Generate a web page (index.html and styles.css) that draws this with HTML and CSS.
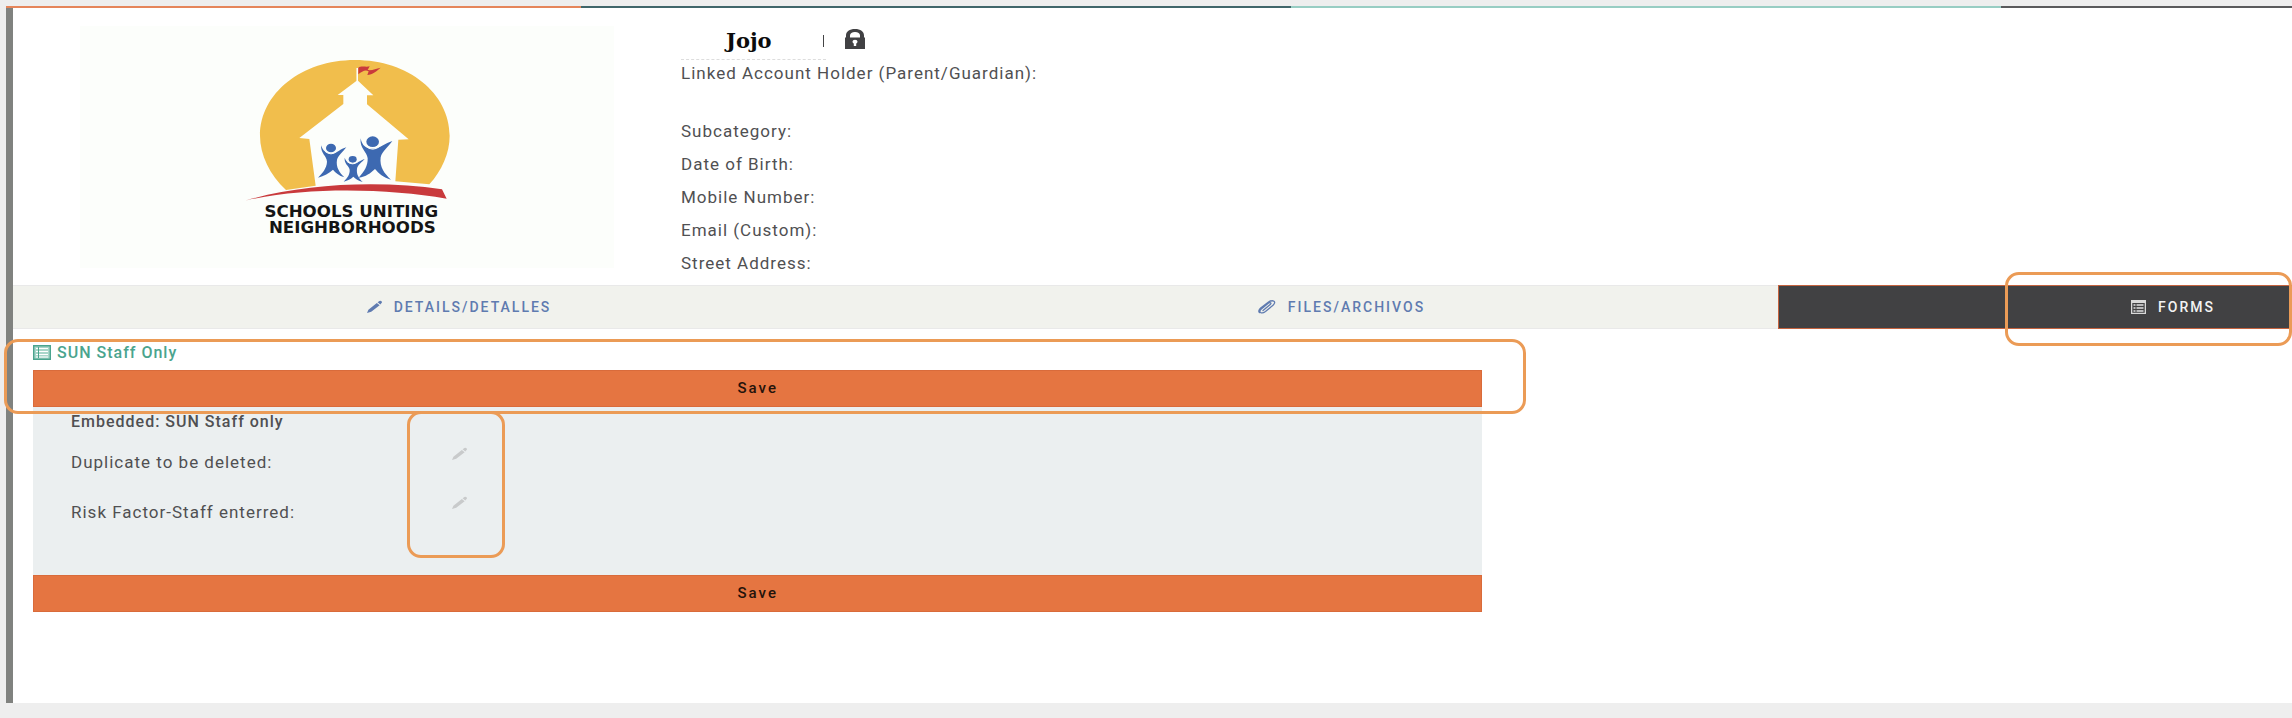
FILE: index.html
```html
<!DOCTYPE html>
<html lang="en">
<head>
<meta charset="utf-8">
<title>SUN Staff Only</title>
<link rel="stylesheet" href="styles.css">
</head>
<body>
<div class="strip"><span class="strip-orange"></span><span class="strip-teal"></span><span class="strip-mint"></span><span class="strip-dark"></span></div>
<main class="card">
  <header class="profile">
    <svg class="logo" viewBox="-420 -42 1602 726" role="img" aria-label="Schools Uniting Neighborhoods">
      <rect x="-420" y="-42" width="1602" height="726" fill="#fcfefb"/>
      <path fill="#f1be4c" d="M198 450C150 405 120 345 120 287C120 160 245 60 405 60C565 60 689 160 689 287C689 340 665 392 628 433L526 424L535 299L566 298L441 193V166H460L414 122V84H410V122L353 165H370V192L238 294L268 297L287 437Z"/>
      <path fill="#fcfefb" d="M410 84h4v40h-4z"/>
      <path fill="#c93a3c" d="M415 83C424 76 437 82 449 79L443 90C457 92 467 86 482 83C470 93 458 104 442 105L446 94C435 88 426 95 415 103Z"/>
      <path fill="#c93a3c" d="M75 482C250 430 480 420 666 448L680 476C500 445 260 440 75 482Z"/>
      <g fill="#3d69b1">
        <ellipse cx="333" cy="324" rx="15" ry="13"/>
        <path d="M303 316C309 333 319 341 334 341C350 341 362 326 379 322C369 335 355 347 351 359C347 382 359 397 373 412C357 408 346 397 339 389C327 400 312 408 294 413C307 400 320 385 321 365C320 348 302 341 303 316Z"/>
        <ellipse cx="458" cy="305" rx="19" ry="16"/>
        <path d="M422 295C426 318 439 326 458 326C480 326 496 309 517 303C506 320 486 333 482 352C478 382 494 402 513 419C490 413 476 400 465 387C451 400 438 410 416 413C433 395 444 377 443 355C441 335 418 325 422 295Z"/>
        <ellipse cx="398" cy="358" rx="12" ry="10"/>
        <path d="M374 353C379 366 386 371 398 371C411 371 422 360 434 357C425 367 413 375 411 386C409 402 415 413 428 426C415 423 406 416 400 410C392 418 383 421 371 425C382 414 390 403 389 389C387 376 372 373 374 353Z"/>
      </g>
      <path d="M315 334q18 15 36 0M436 318q22 19 45 0M383 366q15 11 30 0" fill="none" stroke="#fcfefb" stroke-width="3"/>
      <text class="logo-text" x="394" y="531">SCHOOLS UNITING</text>
      <text class="logo-text" x="397" y="579">NEIGHBORHOODS</text>
    </svg>
    <div class="info">
      <div class="name-row">
        <h1 class="name">Jojo<span class="divider"></span></h1>
        <svg class="lock" viewBox="0 0 20 20" role="img" aria-label="Locked"><path fill="#414143" fill-rule="evenodd" d="M0 8.500h1V6.500C1 2.500 4.500 0 10 0s9 2.500 9 6.500v2h1V20H0zM5 8.500h10V6.500C15 4.500 13 3 10 3S5 4.500 5 6.500zM7.500 12.500c0 1 .6 1.600 1.300 2v2.500h2.400v-2.500c.7-.4 1.300-1 1.300-2a2.500 1.800 0 0 0-5 0z"/></svg>
      </div>
      <p class="linked">Linked Account Holder (Parent/Guardian):</p>
      <ul class="facts">
        <li>Subcategory:</li>
        <li>Date of Birth:</li>
        <li>Mobile Number:</li>
        <li>Email (Custom):</li>
        <li>Street Address:</li>
      </ul>
    </div>
  </header>

  <nav class="tabs">
    <a class="tab" href="#details"><svg class="icon" viewBox="0 0 16 14"><path fill="currentColor" d="M0 13.500L1.500 9.800L10.500 2.600L13.500 5L4.500 12ZM11.300 2L13.300.6Q14.500-.2 15.500.8Q16.400 1.800 15.500 2.800L14.200 4.300Z"/></svg>DETAILS/DETALLES</a>
    <a class="tab" href="#files"><svg class="icon icon-clip" viewBox="0 0 18 14"><path fill="none" stroke="currentColor" stroke-width="1.300" stroke-linecap="round" d="M5 10.500L12.500 4.200Q13.500 3 12.300 2.700Q11.400 2.400 10.300 3.300L3 9.300Q1 11.200 2.500 12.500Q4.500 13.700 7.500 11.500L15 5.300Q17.700 2.600 16 1.300Q13.700-.1 10.500 2L2.700 8Q-.3 10.800 1.500 12.600"/></svg>FILES/ARCHIVOS</a>
    <a class="tab tab-active" href="#forms" aria-current="page"><svg class="icon" viewBox="0 0 15 14"><path fill="#d8d8d8" fill-rule="evenodd" d="M0 0h15v14H0zM1.300 3v9.700h12.400V3z"/><path fill="#b9b9ba" d="M2.500 4h2v2h-2zM5.500 4h7v2h-7zM2.500 7h2v2h-2zM5.500 7h7v2h-7zM2.500 10h2v2h-2zM5.500 10h7v2h-7z"/></svg>FORMS<span class="mark mark-tab"></span></a>
  </nav>

  <form class="form" id="forms">
    <div class="form-head">
      <h2 class="form-title"><svg class="form-icon" viewBox="0 0 18 15"><path fill="#a9d6ca" d="M0 0h18v15H0z"/><path fill="none" stroke="#4aa48e" stroke-width="1.400" d="M.7.7h16.600v13.600H.7z"/><path stroke="#fff" d="M3 3.500h2M6 3.500h9M3 6.500h2M6 6.500h9M3 9.500h2M6 9.500h9M3 12h2M6 12h9"/><path stroke="#4aa48e" d="M5.500 2v11"/></svg>SUN Staff Only</h2>
      <button class="save" type="button">Save</button>
      <span class="mark mark-head"></span>
    </div>
    <section class="panel">
      <h3 class="panel-title">Embedded: SUN Staff only</h3>
      <div class="fields">
        <div class="labels"><span id="dup">Duplicate to be deleted:</span><span id="risk">Risk Factor-Staff enterred:</span></div>
        <div class="edits">
          <button class="edit" type="button" aria-labelledby="dup"><svg class="icon" viewBox="0 0 16 14"><path fill="currentColor" d="M0 13.500L1.500 9.800L10.500 2.600L13.500 5L4.500 12ZM11.300 2L13.300.6Q14.500-.2 15.500.8Q16.400 1.800 15.500 2.800L14.200 4.300Z"/></svg></button>
          <button class="edit" type="button" aria-labelledby="risk"><svg class="icon" viewBox="0 0 16 14"><path fill="currentColor" d="M0 13.500L1.500 9.800L10.500 2.600L13.500 5L4.500 12ZM11.300 2L13.300.6Q14.500-.2 15.500.8Q16.400 1.800 15.500 2.800L14.200 4.300Z"/></svg></button>
          <span class="mark mark-edits"></span>
        </div>
      </div>
    </section>
    <button class="save" type="button">Save</button>
  </form>
</main>
</body>
</html>
```

FILE: styles.css
```css
* {
  box-sizing: border-box;
}

body {
  margin: 0;
  padding: 6px 0 15px 6px;
  min-height: 100vh;
  display: flex;
  flex-direction: column;
  overflow-x: hidden;
  background: #eeeeee;
  color: #505052;
  font-family: Roboto, "Liberation Sans", sans-serif;
  font-size: 17px;
  letter-spacing: 1px;
}

h1,
h2,
h3,
p,
ul {
  margin: 0;
  padding: 0;
}

.strip {
  display: grid;
  grid-template-columns: 575fr 710fr 710fr 291fr;
  height: 2px;
}

.strip-orange { background: #e5855a; }
.strip-teal { background: #40666a; }
.strip-mint { background: #98cdc3; }
.strip-dark { background: #5a5a5c; }

.card {
  flex: 1;
  border-left: 7px solid #80827f;
  background: #ffffff;
}

.profile {
  display: flex;
  gap: 67px;
  padding: 18px 0 0 67px;
  min-height: 277px;
}

.logo {
  flex: 0 1 534px;
  min-width: 0;
  height: 242px;
}

.logo-text {
  fill: #151515;
  font-family: "DejaVu Sans", Lato, sans-serif;
  font-size: 50px;
  font-weight: 700;
  letter-spacing: 0;
  text-anchor: middle;
}

.name-row {
  display: flex;
  align-items: flex-start;
  gap: 19px;
  height: 35px;
}

.name {
  display: flex;
  align-items: center;
  justify-content: space-between;
  width: 145px;
  height: 34px;
  padding: 0 2px 4px 45px;
  border-bottom: 1px dashed #dddddd;
  color: #0c0c0c;
  font: 700 21px "DejaVu Serif", "Liberation Serif", serif;
  letter-spacing: 0;
}

.divider {
  width: 1px;
  height: 12px;
  background: #444446;
}

.lock {
  width: 20px;
  height: 20px;
  margin-top: 3px;
}

.linked {
  line-height: 24px;
}

.facts {
  padding-top: 30px;
  list-style: none;
  line-height: 33px;
}

.tabs {
  display: grid;
  grid-template-columns: 892fr 873fr 514fr;
}

.tab {
  display: flex;
  align-items: center;
  justify-content: center;
  gap: 12px;
  height: 44px;
  border: solid #e9e9e9;
  border-width: 1px 0;
  background: #f1f2ed;
  color: #5f7bb0;
  font-size: 14px;
  font-weight: 500;
  letter-spacing: 2px;
  text-decoration: none;
}

.tab-active {
  position: relative;
  padding-left: 275px;
  border-color: #c5633f;
  border-width: 1px 0 1px 1px;
  background: #414143;
  color: #f3f3f3;
}

.icon {
  width: 15px;
  height: 14px;
}

.icon-clip {
  width: 18px;
}

.mark {
  position: absolute;
  border: 3px solid #eb9b56;
  border-radius: 14px;
  pointer-events: none;
}

.mark-tab {
  inset: -14px 0 -18px 44%;
}

.form {
  width: 63.6%;
  margin: 10px 0 0 20px;
}

.form-head {
  position: relative;
}

.mark-head {
  inset: 0 -44px -7px -29px;
}

.form-title {
  display: flex;
  align-items: center;
  gap: 6px;
  height: 31px;
  padding-bottom: 4px;
  color: #4aa48e;
  font-size: 16px;
  font-weight: 500;
}

.form-icon {
  width: 18px;
  height: 15px;
}

.save {
  display: block;
  width: 100%;
  height: 37px;
  padding: 0 0 2px;
  border: 1px solid #d96b3b;
  background: #e57541;
  color: #24130b;
  font: 500 15px Roboto, "Liberation Sans", sans-serif;
  letter-spacing: 2px;
}

.panel {
  padding: 5px 38px 28px;
  background: #ebeff0;
}

.panel-title {
  font-size: 16px;
  font-weight: 500;
  line-height: 20px;
}

.fields {
  display: flex;
  gap: 80px;
  padding-top: 6px;
}

.labels {
  display: grid;
  align-content: start;
  gap: 16px;
  width: 256px;
  padding-top: 7px;
  line-height: 34px;
}

.edits {
  position: relative;
  display: grid;
  align-content: start;
  gap: 35px;
  width: 98px;
  height: 109px;
  padding: 9px 0 0 45px;
}

.edit {
  display: flex;
  width: 15px;
  height: 14px;
  padding: 0;
  border: 0;
  background: none;
  color: #c8cacb;
}

.mark-edits {
  inset: -27px 0 -11px;
}
```
